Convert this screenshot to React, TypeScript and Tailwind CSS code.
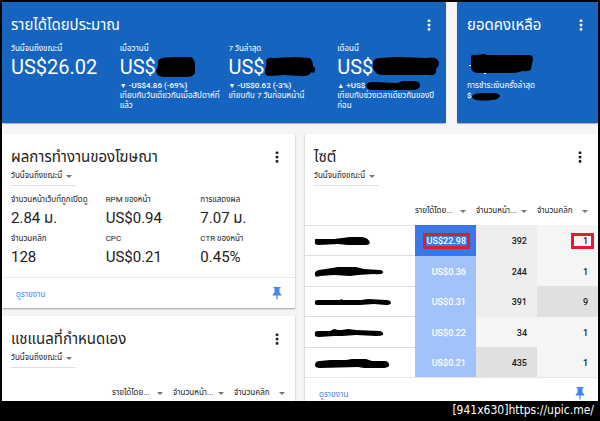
import type { ReactNode } from 'react';

type Delta = { label: string; value: string; sign?: string; delta: string; note: string };

const periods: Delta[] = [
  { label: 'เมื่อวานนี้', value: 'US$', sign: '▼', delta: '-US$4.86 (-69%)', note: 'เทียบกับวันเดียวกันเมื่อสัปดาห์ที่แล้ว' },
  { label: '7 วันล่าสุด', value: 'US$', sign: '▼', delta: '-US$0.62 (-3%)', note: 'เทียบกับ 7 วันก่อนหน้านี้' },
  { label: 'เดือนนี้', value: 'US$', sign: '▲', delta: '+US$', note: 'เทียบกับช่วงเวลาเดียวกันของปีก่อน' },
];

const periodMarks = [
  'M3 3 Q6 0 20 0 L36 0 Q40 2 40 8 L40 16 Q38 20 32 20 L10 20 Q4 20 2 17 L1 14 Q4 8 3 3 Z',
  'M2 3 Q4 0 10 1 L30 0 L46 1 Q49 4 49 9 Q53 12 50 16 Q47 14 46 17 Q42 20 36 19 L20 18 L6 19 Q-1 18 1 13 Q3 8 2 3 Z',
  'M1 5 Q2 1 8 1 L22 0 L30 0 L54 1 Q66 -1 67 6 Q67 9 64 12 Q65 19 57 18 L12 18 Q4 18 3 14 Q-1 10 1 5 Z',
];

const stats = [
  { label: 'จำนวนหน้าเว็บที่ถูกเปิดดู', value: '2.84 ม.' },
  { label: 'RPM ของหน้า', value: 'US$0.94' },
  { label: 'การแสดงผล', value: '7.07 ม.' },
  { label: 'จำนวนคลิก', value: '128' },
  { label: 'CPC', value: 'US$0.21' },
  { label: 'CTR ของหน้า', value: '0.45%' },
];

const sites = [
  {
    mark: 'M1 12 Q0 8 4 9 L20 9 L36 7 L48 7 Q55 8 56 13 Q55 15 52 15 L34 15 L24 14 L5 15 Q0 15 1 12 Z',
    revenue: 'US$22.98', views: '392', clicks: '1', viewsBg: 'bg-[#eeeeee]', clicksBg: 'bg-[#f5f5f5]', top: true,
  },
  {
    mark: 'M1 14 Q0 10 5 9 L18 7 L24 6 L42 6 L50 8 L66 9 Q70 10 69 12 Q67 14 60 13 L44 14 L36 15 L20 14 L6 15 Q1 17 1 14 Z',
    revenue: 'US$0.36', views: '244', clicks: '1', viewsBg: 'bg-[#eeeeee]', clicksBg: 'bg-[#f5f5f5]',
  },
  {
    mark: 'M1 12 Q0 9 4 9 L26 9 L27 8 L29 9 L47 9 L54 8 L72 9 Q77 9 77 12 Q76 14 72 14 L60 13 L46 14 L5 14 Q0 14 1 12 Z',
    revenue: 'US$0.31', views: '391', clicks: '9', viewsBg: 'bg-[#eeeeee]', clicksBg: 'bg-[#e0e0e0]',
  },
  {
    mark: 'M1 12 Q0 9 4 9 L16 9 L20 7 L24 8 L28 8 L34 7 L42 8 L66 9 Q70 10 69 13 Q67 14 62 14 L42 13 L28 14 L20 14 L5 15 Q0 15 1 12 Z',
    revenue: 'US$0.22', views: '34', clicks: '1', viewsBg: 'bg-[#f5f5f5]', clicksBg: 'bg-[#f5f5f5]',
  },
  {
    mark: 'M1 13 Q1 9 6 9 L16 8 L32 8 L38 7 L52 7 L58 9 L72 9 Q76 11 75 14 Q73 16 68 16 L50 16 L44 15 L6 16 Q1 16 1 13 Z',
    revenue: 'US$0.21', views: '435', clicks: '1', viewsBg: 'bg-[#e0e0e0]', clicksBg: 'bg-[#f5f5f5]',
  },
];

function MoreButton() {
  return (
    <button type="button" aria-label="More" className="flex h-5 w-3 items-center justify-center">
      <svg width="4" height="12" viewBox="0 0 4 12" fill="currentColor">
        <rect x="0.7" y="0.4" width="2.7" height="2.7" rx="0.8" />
        <rect x="0.7" y="4.7" width="2.7" height="2.7" rx="0.8" />
        <rect x="0.7" y="9" width="2.7" height="2.7" rx="0.8" />
      </svg>
    </button>
  );
}

function CardHeader({ title }: { title: string }) {
  return (
    <div className="flex items-center justify-between">
      <h2 className="text-[15px] leading-5 whitespace-nowrap">{title}</h2>
      <MoreButton />
    </div>
  );
}

function Caret() {
  return (
    <svg width="6" height="3" viewBox="0 0 6 3" className="shrink-0 fill-[#757575]">
      <path d="M0 0h6L3 3z" />
    </svg>
  );
}

function RangeSelect({ label }: { label: string }) {
  return (
    <div className="flex h-[19px] w-[65px] items-center justify-between border-b border-[#e0e0e0] pr-1">
      <select aria-label={label} className="h-[17px] w-[54px] appearance-none bg-transparent text-[8px] leading-4 outline-none">
        <option>วันนี้จนถึงขณะนี้</option>
      </select>
      <Caret />
    </div>
  );
}

function CardFooter() {
  return (
    <div className="flex h-[31px] items-center justify-between border-t border-[#e8e8e8] pr-[13px] pl-[14px] text-[#4285f4]">
      <a href="#report" className="pt-1 text-[8px] leading-3">ดูรายงาน</a>
      <button type="button" aria-label="Pin">
        <svg width="10" height="13" viewBox="0 0 10 13" fill="currentColor">
          <path d="M1.5 0h7v1.3h-1v4.2L9.3 7.4v1.2H5.6V12L5 13l-.6-1V8.6H.7V7.4l1.8-1.9V1.3h-1z" />
        </svg>
      </button>
    </div>
  );
}

function SortHead() {
  return (
    <thead>
      <tr className="h-[25px] align-top text-[8px]">
        <th aria-label="Name" />
        {['รายได้โดย...', 'จำนวนหน้า...', 'จำนวนคลิก'].map((name) => (
          <th key={name} className="w-[61px] p-0 font-normal">
            <button type="button" className="flex h-[22px] w-full items-center justify-between pr-[10px] whitespace-nowrap">
              {name}
              <Caret />
            </button>
          </th>
        ))}
      </tr>
    </thead>
  );
}

function Card({ title, children }: { title: string; children: ReactNode }) {
  return (
    <section className="rounded-[1px] bg-white shadow-[0_1px_2px_rgba(0,0,0,0.35)]">
      <div className="pt-[13px] pr-3 pl-[9px]">
        <CardHeader title={title} />
        <RangeSelect label={title} />
      </div>
      {children}
    </section>
  );
}

export default function App() {
  return (
    <div className="flex h-screen flex-col bg-black font-[Roboto,'Noto_Sans_Thai',sans-serif] text-[#212121]">
      <main className="mx-[2px] mt-[2px] min-h-0 flex-1 overflow-hidden bg-[#f5f5f5]">
        <div className="grid grid-cols-[444fr_141fr] gap-[11px] text-white">
          {/* Estimated earnings */}
          <section className="rounded-[1px] bg-[#1565c0] pt-[13px] pb-3 pl-[9px] shadow-[0_1px_1px_rgba(0,0,0,0.3)]">
            <div className="pr-[11px]">
              <CardHeader title="รายได้โดยประมาณ" />
            </div>
            <div className="mt-2 grid grid-cols-4">
              <div>
                <p className="text-[8px] leading-3">วันนี้จนถึงขณะนี้</p>
                <p className="text-[20px] leading-6">US$26.02</p>
              </div>
              {periods.map((p, i) => (
                <div key={p.label}>
                  <p className="text-[8px] leading-3">{p.label}</p>
                  <div className="flex items-center text-[20px] leading-6">
                    {p.value}
                    <svg width="68" height="21" viewBox="1 0 68 21" className="shrink-0">
                      <path d={periodMarks[i]} />
                    </svg>
                  </div>
                  <div className="mt-[2px] flex items-center text-[8px] leading-[10px] font-medium whitespace-nowrap">
                    <span className="w-[9px] shrink-0 text-[7px]">{p.sign}</span>
                    {p.delta}
                    {i === 2 && (
                      <svg width="56" height="10" viewBox="0 0 56 10">
                        <path d="M1 4Q2 1 8 1L32 2L38 0L50 0Q56 1 55 5Q54 9 48 9L32 9L8 9Q1 9 1 4Z" />
                      </svg>
                    )}
                  </div>
                  <p className="pr-2 text-[8px] leading-[10px]">{p.note}</p>
                </div>
              ))}
            </div>
          </section>

          {/* Balance */}
          <section className="rounded-[1px] bg-[#1565c0] pt-[13px] pr-[11px] pl-[10px] shadow-[0_1px_1px_rgba(0,0,0,0.3)]">
            <CardHeader title="ยอดคงเหลือ" />
            <svg width="68" height="24" viewBox="0 0 68 24" className="mt-[18px]">
              <path fill="#fff" d="M2 12h3v1h-3zM17 19h2v2h-2z" />
              <path d="M4 4Q4 1 8 2L18 1L20 2L62 2Q66 2 66 6L64 16Q63 19 56 18L48 20L10 20Q4 19 4 14Z" />
            </svg>
            <p className="mt-1 text-[8px] leading-[10px] whitespace-nowrap">การชำระเงินครั้งล่าสุด</p>
            <div className="flex items-center text-[8px] leading-[10px] font-medium">
              $
              <svg width="28" height="9" viewBox="0 0 28 9">
                <path d="M0 4Q2 1 12 1L22 1Q28 2 28 4Q26 8 20 8Q14 9 4 8Q0 7 0 4Z" />
              </svg>
            </div>
          </section>
        </div>

        <div className="mt-[11px] grid grid-cols-2 gap-[10px]">
          <div className="flex flex-col gap-2">
            <Card title="ผลการทำงานของโฆษณา">
              <dl className="mt-2 mb-[10px] grid grid-cols-3 gap-y-[5px] pl-[9px]">
                {stats.map((s) => (
                  <div key={s.label}>
                    <dt className="text-[8px] leading-3 whitespace-nowrap">{s.label}</dt>
                    <dd className="mt-[2px] text-[15px] leading-5 whitespace-nowrap">{s.value}</dd>
                  </div>
                ))}
              </dl>
              <CardFooter />
            </Card>
            <Card title="แชแนลที่กำหนดเอง">
              <table className="mt-[14px] w-full table-fixed border-collapse text-left">
                <SortHead />
              </table>
            </Card>
          </div>

          {/* Sites */}
          <Card title="ไซต์">
            <table className="mt-[14px] h-[177px] w-full table-fixed border-collapse text-left">
              <SortHead />
              <tbody className="text-right text-[9px] leading-3 font-medium">
                {sites.map((s) => (
                  <tr key={s.revenue}>
                    <td className="border-t border-[#e0e0e0] p-0 pt-1 pl-[9px]">
                      <svg width="80" height="24" viewBox="0 0 80 24" className="block">
                        <path d={s.mark} />
                      </svg>
                    </td>
                    <td className={s.top ? 'bg-[#3b78e7] p-0 pt-[2px] pr-[10px] text-white' : 'bg-[#a1c2fa] p-0 pt-[2px] pr-[10px] text-white'}>
                      <span className="relative">
                        {s.revenue}
                        {s.top && <span className="absolute -inset-x-1 -inset-y-[3px] border-3 border-[#e31b2d]" />}
                      </span>
                    </td>
                    <td className={`p-0 pt-[2px] pr-[10px] ${s.viewsBg}`}>{s.views}</td>
                    <td className={`p-0 pt-[2px] pr-[10px] ${s.clicksBg}`}>
                      <span className="relative">
                        {s.clicks}
                        {s.top && <span className="absolute -inset-y-[3px] -right-[6px] -left-[12px] border-3 border-[#e31b2d]" />}
                      </span>
                    </td>
                  </tr>
                ))}
              </tbody>
            </table>
            <CardFooter />
          </Card>
        </div>
      </main>

      <footer className="h-5 pr-[6px] text-right font-['DejaVu_Sans_Condensed','DejaVu_Sans',sans-serif] text-[12px] leading-[18px] text-white">
        [941x630]https://upic.me/
      </footer>
    </div>
  );
}
